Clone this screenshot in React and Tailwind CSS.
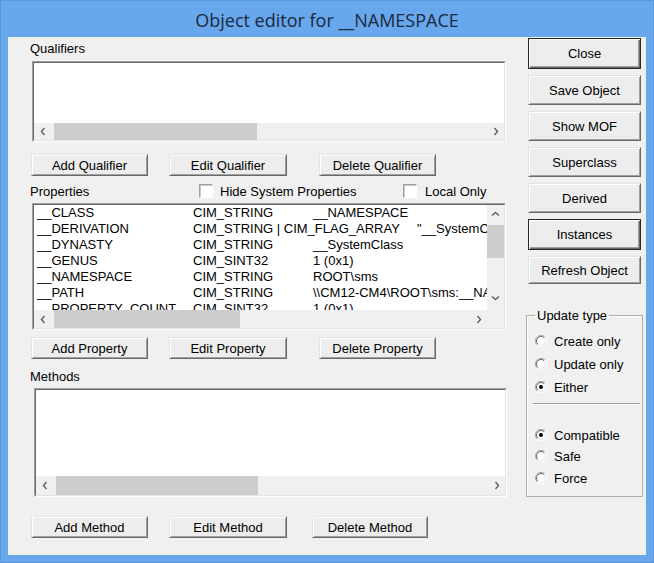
import React from 'react';

const properties = [
  { name: '__CLASS', type: 'CIM_STRING', value: '__NAMESPACE' },
  { name: '__DERIVATION', type: 'CIM_STRING | CIM_FLAG_ARRAY', value: '"__SystemClass"', wide: true },
  { name: '__DYNASTY', type: 'CIM_STRING', value: '__SystemClass' },
  { name: '__GENUS', type: 'CIM_SINT32', value: '1 (0x1)' },
  { name: '__NAMESPACE', type: 'CIM_STRING', value: 'ROOT\\sms' },
  { name: '__PATH', type: 'CIM_STRING', value: '\\\\CM12-CM4\\ROOT\\sms:__NAMESPACE' },
  { name: '__PROPERTY_COUNT', type: 'CIM_SINT32', value: '1 (0x1)' },
];

function Chevron({ dir }) {
  const points = {
    left: '4.5,1 1.5,4.5 4.5,8',
    right: '1.5,1 4.5,4.5 1.5,8',
    up: '1,4.5 4.5,1.5 8,4.5',
    down: '1,1.5 4.5,4.5 8,1.5',
  };
  const horizontal = dir === 'left' || dir === 'right';
  return (
    <svg width={horizontal ? 6 : 9} height={horizontal ? 9 : 6} viewBox={horizontal ? '0 0 6 9' : '0 0 9 6'}>
      <polyline points={points[dir]} fill="none" stroke="#606060" strokeWidth="1.4" />
    </svg>
  );
}

function Btn({ children, className = '', isDefault = false }) {
  return (
    <div
      className={`flex items-center justify-center bg-[#ededed] leading-[15px] ${
        isDefault
          ? 'border border-[#262626] shadow-[inset_1px_1px_#ffffff,inset_-1px_-1px_#696969,inset_-2px_-2px_#a0a0a0]'
          : 'border border-t-[#e3e3e3] border-l-[#e3e3e3] border-r-[#696969] border-b-[#696969] shadow-[inset_1px_1px_#ffffff,inset_-1px_-1px_#a0a0a0]'
      } ${className}`}
    >
      {children}
    </div>
  );
}

function Checkbox() {
  return (
    <span className="block w-[14px] h-[14px] bg-white border border-t-[#a0a0a0] border-l-[#a0a0a0] border-r-[#ffffff] border-b-[#ffffff] shadow-[inset_1px_1px_#c8c8c8]" />
  );
}

function Radio({ checked }) {
  return (
    <svg width="12" height="12" viewBox="0 0 12 12">
      <circle cx="6" cy="6" r="5.5" fill="#ffffff" />
      <path d="M 2.1 9.9 A 5.5 5.5 0 0 1 9.9 2.1" fill="none" stroke="#a0a0a0" />
      <path d="M 9.9 2.1 A 5.5 5.5 0 0 1 2.1 9.9" fill="none" stroke="#ffffff" />
      <path d="M 2.8 9.2 A 4.5 4.5 0 0 1 9.2 2.8" fill="none" stroke="#696969" />
      <path d="M 9.2 2.8 A 4.5 4.5 0 0 1 2.8 9.2" fill="none" stroke="#e3e3e3" />
      {checked && <circle cx="6" cy="6" r="2" fill="#000000" />}
    </svg>
  );
}

function HScroll({ thumb, height = 'h-[17px]' }) {
  return (
    <div className={`flex flex-1 bg-[#f0f0f0] ${height}`}>
      <div className="w-[17px] flex items-center justify-center">
        <Chevron dir="left" />
      </div>
      <div className="flex-1 flex">
        <div className={`bg-[#cdcdcd] ${thumb}`} />
      </div>
      <div className="w-[17px] flex items-center justify-center">
        <Chevron dir="right" />
      </div>
    </div>
  );
}

function VScroll() {
  return (
    <div className="w-[17px] flex flex-col bg-[#f0f0f0]">
      <div className="h-[17px] flex items-center justify-center">
        <Chevron dir="up" />
      </div>
      <div className="flex-1 flex flex-col">
        <div className="mt-[3px] h-[33px] bg-[#cdcdcd]" />
      </div>
      <div className="h-[17px] mb-[4px] flex items-center justify-center">
        <Chevron dir="down" />
      </div>
    </div>
  );
}

function ListBox({ className = '', children }) {
  return (
    <div
      className={`flex flex-col border border-t-[#a0a0a0] border-l-[#a0a0a0] border-r-[#ffffff] border-b-[#ffffff] ${className}`}
    >
      <div className="flex-1 min-h-0 flex flex-col bg-white border border-t-[#696969] border-l-[#696969] border-r-[#e3e3e3] border-b-[#e3e3e3] overflow-hidden">
        {children}
      </div>
    </div>
  );
}

function RadioRow({ label, checked, className = '' }) {
  return (
    <div className={`flex items-center h-[16px] pl-[8px] ${className}`}>
      <Radio checked={checked} />
      <span className="ml-[7px] leading-[15px]">{label}</span>
    </div>
  );
}

export default function App() {
  return (
    <div className="w-[654px] h-[563px] bg-[#68a7ec] border border-[#5a96dc] flex flex-col font-['Liberation_Sans',Arial,sans-serif] text-[13px] leading-[15px] text-black overflow-hidden">
      {/* Title bar */}
      <div className="h-[36px] shrink-0 flex items-center justify-center pt-[3px] font-['Open_Sans',sans-serif] text-[18px] text-[#1b2a3d]">
        Object editor for __NAMESPACE
      </div>

      {/* Client area */}
      <div className="ml-[7px] mr-[7px] mb-[7px] flex-1 bg-[#f0f0f0] flex">
        {/* Left column */}
        <div className="ml-[22px] w-[477px] flex flex-col">
          <div className="mt-[4px] h-[15px]">Qualifiers</div>
          <ListBox className="mt-[5px] ml-[2px] w-[474px] h-[81px]">
            <div className="flex-1" />
            <div className="flex">
              <HScroll thumb="ml-[3px] w-[203px]" />
            </div>
          </ListBox>
          <div className="mt-[12px] flex h-[22px]">
            <Btn className="ml-[1px] w-[117px]">Add Qualifier</Btn>
            <Btn className="ml-[21px] w-[118px]">Edit Qualifier</Btn>
            <Btn className="ml-[32px] w-[117px]">Delete Qualifier</Btn>
          </div>

          <div className="mt-[7px] h-[16px] flex items-center">
            <span className="w-[169px]">Properties</span>
            <div className="w-[204px] flex items-center">
              <Checkbox />
              <span className="ml-[7px]">Hide System Properties</span>
            </div>
            <Checkbox />
            <span className="ml-[8px]">Local Only</span>
          </div>
          <ListBox className="mt-[4px] ml-[2px] w-[474px] h-[127px]">
            <div className="flex-1 min-h-0 flex">
              <div className="flex-1 overflow-hidden pl-[3px]">
                {properties.map((p) => (
                  <div key={p.name} className="flex h-[16px] leading-[16px] whitespace-nowrap">
                    <span className="w-[156px] shrink-0">{p.name}</span>
                    <span className={`shrink-0 ${p.wide ? 'w-[224px]' : 'w-[120px]'}`}>{p.type}</span>
                    <span className="shrink-0">{p.value}</span>
                  </div>
                ))}
              </div>
              <VScroll />
            </div>
            <div className="flex">
              <HScroll thumb="ml-[3px] w-[186px]" height="h-[18px]" />
              <div className="w-[17px] bg-[#f0f0f0]" />
            </div>
          </ListBox>
          <div className="mt-[7px] flex h-[22px]">
            <Btn className="ml-[1px] w-[117px]">Add Property</Btn>
            <Btn className="ml-[21px] w-[118px]">Edit Property</Btn>
            <Btn className="ml-[32px] w-[117px]">Delete Property</Btn>
          </div>

          <div className="mt-[9px] h-[16px] flex items-center">Methods</div>
          <ListBox className="mt-[4px] ml-[4px] w-[473px] h-[109px]">
            <div className="flex-1" />
            <div className="flex">
              <HScroll thumb="ml-[3px] w-[202px]" height="h-[19px]" />
            </div>
          </ListBox>
          <div className="mt-[19px] flex h-[22px]">
            <Btn className="ml-[1px] w-[117px]">Add Method</Btn>
            <Btn className="ml-[21px] w-[118px]">Edit Method</Btn>
            <Btn className="ml-[25px] w-[116px]">Delete Method</Btn>
          </div>
        </div>

        {/* Right column */}
        <div className="ml-[19px] w-[117px] flex flex-col">
          <div className="mt-[1px] mx-[2px] flex flex-col gap-[6px]">
            <Btn isDefault className="h-[31px]">Close</Btn>
            <Btn className="h-[30px]">Save Object</Btn>
            <Btn className="h-[30px]">Show MOF</Btn>
            <Btn className="h-[30px]">Superclass</Btn>
            <Btn className="h-[30px]">Derived</Btn>
            <Btn isDefault className="h-[31px]">Instances</Btn>
            <Btn className="h-[28px]">Refresh Object</Btn>
          </div>

          <fieldset className="mt-[24px] h-[189px] border border-[#adadad] shadow-[inset_1px_1px_#ffffff]">
            <legend className="ml-[8px] px-[2px] leading-[15px]">Update type</legend>
            <RadioRow className="mt-[10px]" label="Create only" />
            <RadioRow className="mt-[7px]" label="Update only" />
            <RadioRow className="mt-[7px]" label="Either" checked />
            <div className="mt-[8px] ml-[6px] mr-[2px] h-[2px] border-t border-t-[#a0a0a0] border-b border-b-[#ffffff]" />
            <RadioRow className="mt-[22px]" label="Compatible" checked />
            <RadioRow className="mt-[5px]" label="Safe" />
            <RadioRow className="mt-[6px]" label="Force" />
          </fieldset>
        </div>
      </div>
    </div>
  );
}
